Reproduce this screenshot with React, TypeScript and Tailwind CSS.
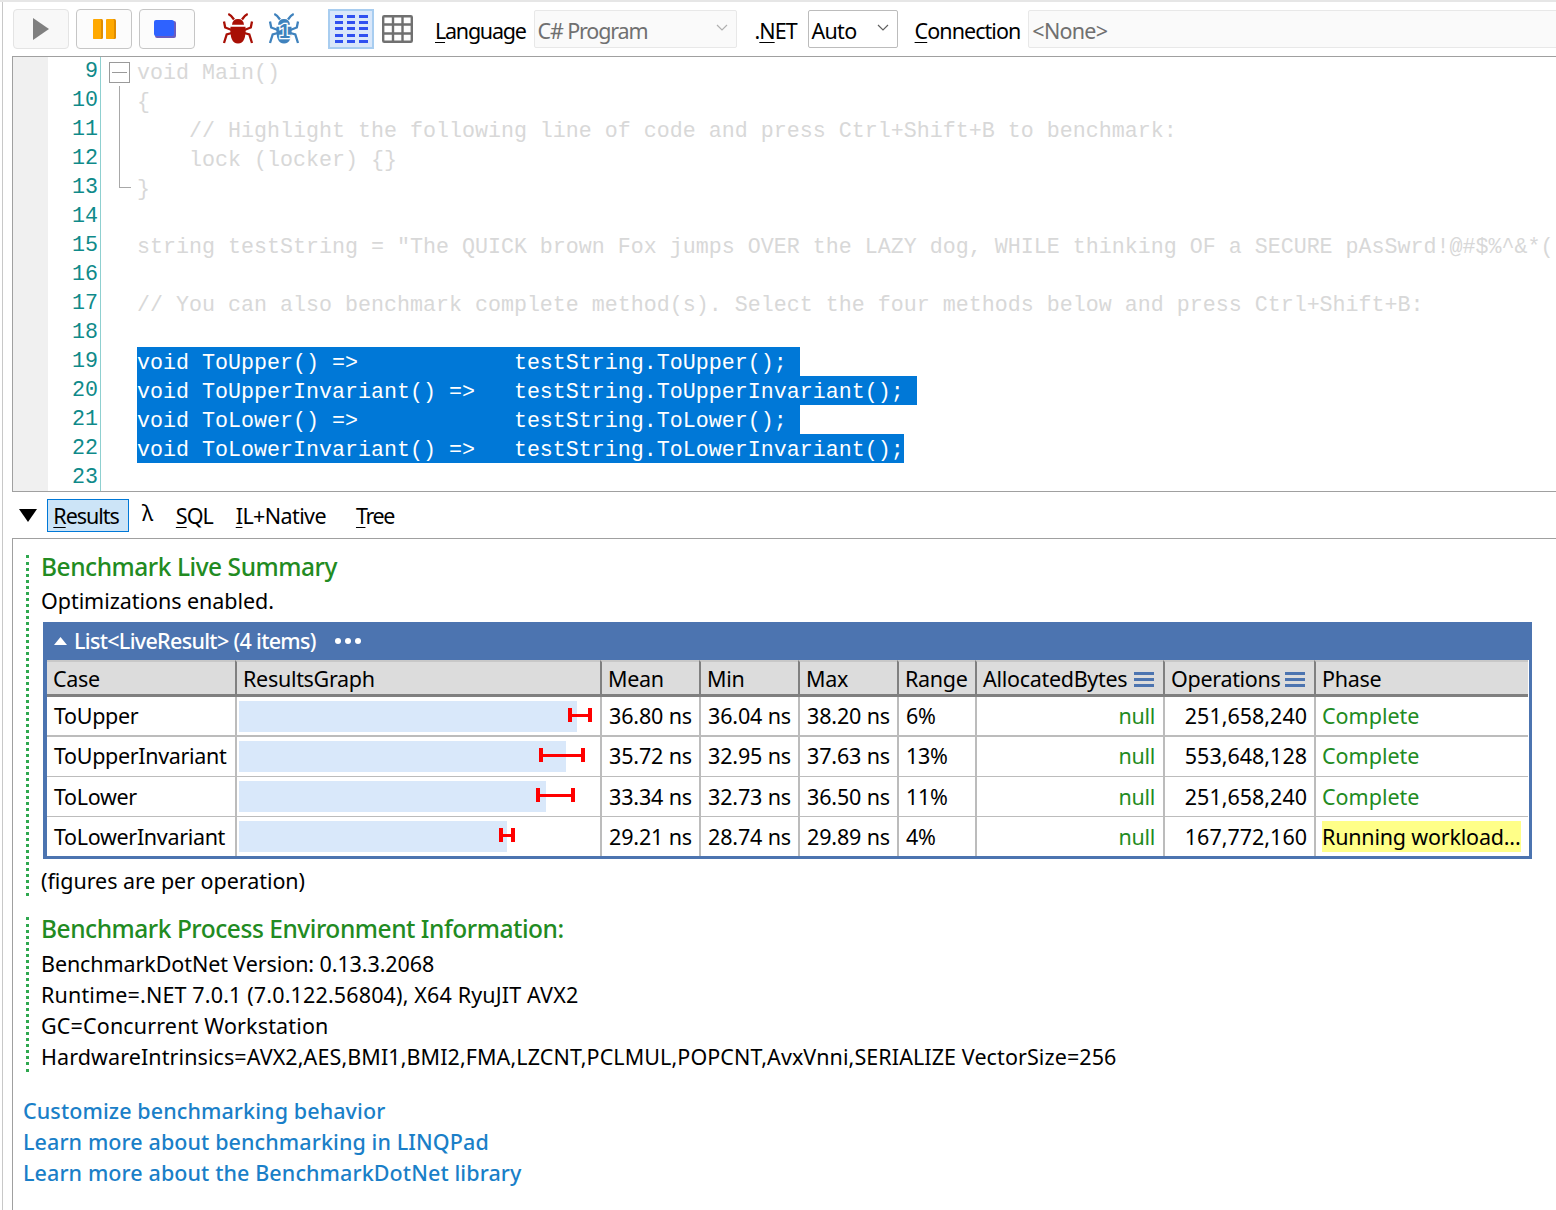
import React from "react";

const ui = "font-['Noto_Sans',sans-serif]";
const mono = "font-['Liberation_Mono',monospace]";

function Mn({ k, rest, pre = "" }: { k: string; rest: string; pre?: string }) {
  return (
    <span>
      {pre}
      <span className="underline underline-offset-[3px] decoration-1">{k}</span>
      {rest}
    </span>
  );
}

function Bug({ color, one }: { color: string; one?: boolean }) {
  return (
    <svg width="32" height="32" viewBox="0 0 32 32" fill="none">
      <g stroke={color} strokeWidth="2.3" fill="none">
        <path d="M6.3 1 Q9 2 12 6.5" />
        <path d="M25.7 1 Q23 2 20 6.5" />
        <path d="M2 8.5 L3.2 14.5 L9.7 17" />
        <path d="M30 8.5 L28.8 14.5 L22.3 17" />
        <path d="M2 30 L4.7 21.5 L9.7 20" />
        <path d="M30 30 L27.3 21.5 L22.3 20" />
      </g>
      <path d="M10 11.7 Q10.5 6 16 6 Q21.5 6 22 11.7 Z" fill={color} />
      <path d="M8.5 13.7 H23.5 Q24.5 30.5 16 30.5 Q7.5 30.5 8.5 13.7 Z" fill={color} />
      {one && (
        <text
          x="16"
          y="25"
          textAnchor="middle"
          fontFamily="Liberation Sans, sans-serif"
          fontWeight="700"
          fontSize="20"
          fill={color}
          stroke="#ffffff"
          strokeWidth="2.4"
          paintOrder="stroke"
        >
          1
        </text>
      )}
    </svg>
  );
}

function ToolButton({ children, faded }: { children: React.ReactNode; faded?: boolean }) {
  return (
    <div className={`w-[56px] h-[40px] shrink-0 rounded-[4px] border flex items-center justify-center ${faded ? "border-[#e4e4e4] bg-[#f8f8f8]" : "border-[#c6c6c6] bg-[#fcfcfc]"}`}>
      {children}
    </div>
  );
}

function Combo({ label, w, dark, track }: { label: string; w: string; dark?: boolean; track: string }) {
  return (
    <div className={`${w} h-[38px] shrink-0 rounded-[2px] border flex items-center justify-between pl-[3px] pr-[8px] ${dark ? "border-[#bcbcbc] text-black" : "border-[#e8e8e8] bg-[#fafafa] text-[#707070]"}`}>
      <span className={`pt-[4px] ${track}`}>{label}</span>
      <svg width="12" height="8" viewBox="0 0 12 8" className="mb-[3px]"><path d="M1 1 L6 6 L11 1" fill="none" stroke={dark ? "#606060" : "#b0b0b0"} strokeWidth="1.2" /></svg>
    </div>
  );
}

const codeRows: { n: number; text?: string; sel?: boolean; fold?: "box" | "line" | "end" }[] = [
  { n: 9, text: "void Main()", fold: "box" },
  { n: 10, text: "{", fold: "line" },
  { n: 11, text: "    // Highlight the following line of code and press Ctrl+Shift+B to benchmark:", fold: "line" },
  { n: 12, text: "    lock (locker) {}", fold: "line" },
  { n: 13, text: "}", fold: "end" },
  { n: 14 },
  { n: 15, text: 'string testString = "The QUICK brown Fox jumps OVER the LAZY dog, WHILE thinking OF a SECURE pAsSwrd!@#$%^&*(' },
  { n: 16 },
  { n: 17, text: "// You can also benchmark complete method(s). Select the four methods below and press Ctrl+Shift+B:" },
  { n: 18 },
  { n: 19, text: "void ToUpper() =>            testString.ToUpper(); ", sel: true },
  { n: 20, text: "void ToUpperInvariant() =>   testString.ToUpperInvariant(); ", sel: true },
  { n: 21, text: "void ToLower() =>            testString.ToLower(); ", sel: true },
  { n: 22, text: "void ToLowerInvariant() =>   testString.ToLowerInvariant();", sel: true },
  { n: 23 },
];

function Fold({ kind }: { kind?: "box" | "line" | "end" }) {
  if (kind === "box")
    return (
      <div className="w-[21px] h-[21px] ml-[8px] mt-[5px] border border-[#9a9a9a] flex items-center justify-center">
        <div className="w-[15px] h-px bg-[#9a9a9a]" />
      </div>
    );
  if (kind === "line") return <div className="ml-[18px] w-px h-full bg-[#a8a8a8]" />;
  if (kind === "end") return <div className="ml-[18px] w-[12px] h-[15px] border-l border-b border-[#a8a8a8]" />;
  return null;
}

const headers = ["Case", "ResultsGraph", "Mean", "Min", "Max", "Range", "AllocatedBytes", "Operations", "Phase"];

const rows = [
  { name: "ToUpper", bar: "w-[338px]", errL: "ml-[329px]", errW: "w-[24px]", mean: "36.80 ns", min: "36.04 ns", max: "38.20 ns", range: "6%", ops: "251,658,240", phase: "Complete", border: "border-b-2 h-[40px]", pad: "" },
  { name: "ToUpperInvariant", bar: "w-[327px]", errL: "ml-[300px]", errW: "w-[46px]", mean: "35.72 ns", min: "32.95 ns", max: "37.63 ns", range: "13%", ops: "553,648,128", phase: "Complete", border: "border-b h-[40px]", pad: "" },
  { name: "ToLower", bar: "w-[307px]", errL: "ml-[297px]", errW: "w-[39px]", mean: "33.34 ns", min: "32.73 ns", max: "36.50 ns", range: "11%", ops: "251,658,240", phase: "Complete", border: "border-b h-[40px]", pad: "pt-[2px]" },
  { name: "ToLowerInvariant", bar: "w-[268px]", errL: "ml-[260px]", errW: "w-[16px]", mean: "29.21 ns", min: "28.74 ns", max: "29.89 ns", range: "4%", ops: "167,772,160", phase: "Running", border: "h-[39px]", pad: "pt-[2px]" },
];

function Menu() {
  return (
    <span className="ml-auto mr-[3px] flex flex-col gap-[3px] w-[20px]">
      <span className="h-[3px] bg-[#4c74b0]" />
      <span className="h-[3px] bg-[#4c74b0]" />
      <span className="h-[3px] bg-[#4c74b0]" />
    </span>
  );
}

function DottedBlock({ children }: { children: React.ReactNode }) {
  return (
    <div className="ml-[13px] pl-[12px] border-l-[3px] border-dotted border-[#2fa84f]">{children}</div>
  );
}

const heading = "text-[#228b22] text-[24.5px] tracking-[-0.46px] font-medium leading-[23px]";

export default function App() {
  const cell = "flex items-center border-[#bcbcbc] px-[7px] overflow-hidden whitespace-nowrap";
  return (
    <div className={`${ui} w-[1556px] h-[1210px] overflow-hidden bg-white text-black text-[21.5px] tracking-[-0.3px] border-t-2 border-t-[#e6e6e6] pl-[2px]`}>
      <div className="border-l border-l-[#c8c8c8] h-full">
        {/* toolbar */}
        <div className="h-[54px] flex items-center pl-[10px] tracking-[-1px]">
          <div className="flex gap-[7px] shrink-0">
            <ToolButton faded>
              <svg width="18" height="24" viewBox="0 0 18 24"><path d="M1 1 L17 12 L1 23 Z" fill="#808080" /></svg>
            </ToolButton>
            <ToolButton>
              <svg width="24" height="22" viewBox="0 0 24 22">
                <rect x="1" y="1" width="10" height="20" rx="1.5" fill="#e08c00" />
                <rect x="1" y="1" width="8" height="20" rx="1.5" fill="#ffa900" />
                <rect x="14" y="1" width="10" height="20" rx="1.5" fill="#e08c00" />
                <rect x="14" y="1" width="8" height="20" rx="1.5" fill="#ffa900" />
              </svg>
            </ToolButton>
            <ToolButton>
              <svg width="22" height="18" viewBox="0 0 22 18" className="mr-[4px]">
                <rect x="1" y="1" width="21" height="17" rx="2" fill="#6a5cc0" />
                <rect x="0" y="0" width="20" height="16" rx="2" fill="#2e62ff" />
              </svg>
            </ToolButton>
          </div>
          <div className="ml-[27px] shrink-0"><Bug color="#a80f05" /></div>
          <div className="ml-[14px] shrink-0"><Bug color="#3f82bd" one /></div>
          <div className="ml-[28px] w-[46px] h-[40px] shrink-0 bg-[#d9e7fa] border-2 border-[#a8cdf0] flex items-center justify-center">
            <svg width="33" height="29" viewBox="0 0 33 29" fill="#2f50f0">
              {[0, 6, 12, 19, 25].map((y) => (
                <g key={y}>
                  <rect x="0" y={y} width="8" height="3" />
                  <rect x="12" y={y} width="8" height="3" />
                  <rect x="24" y={y} width="9" height="3" />
                </g>
              ))}
            </svg>
          </div>
          <div className="ml-[8px] shrink-0">
            <svg width="31" height="28" viewBox="0 0 31 28" fill="none" stroke="#707070" strokeWidth="2.4">
              <rect x="1.2" y="1.2" width="28.6" height="25.6" rx="1" />
              <path d="M11 1 V27 M20.5 1 V27 M1 9.5 H30 M1 18.5 H30" />
            </svg>
          </div>
          <div className="ml-[22px] shrink-0 pt-[4px] tracking-[-1.25px]"><Mn k="L" rest="anguage" /></div>
          <div className="ml-[8px] shrink-0"><Combo label="C# Program" w="w-[203px]" track="tracking-[-1.15px]" /></div>
          <div className="ml-[18px] shrink-0 pt-[4px]"><Mn pre="." k="N" rest="ET" /></div>
          <div className="ml-[11px] shrink-0"><Combo label="Auto" w="w-[90px]" dark track="tracking-[-0.75px]" /></div>
          <div className="ml-[17px] shrink-0 pt-[4px] tracking-[-0.95px]"><Mn k="C" rest="onnection" /></div>
          <div className="ml-[8px] shrink-0"><Combo label="<None>" w="w-[600px]" track="tracking-[-0.75px]" /></div>
        </div>

        {/* editor */}
        <div className={`${mono} ml-[9px] border border-[#a0a0a0] border-r-0 h-[436px] overflow-hidden text-[21.67px] tracking-[0px] leading-[29px]`}>
          {codeRows.map((r) => (
            <div key={r.n} className="flex h-[29px]">
              <div className="w-[35px] bg-[#f0f0f0] shrink-0" />
              <div className="w-[50px] text-right text-[#0f8a8a] shrink-0">{r.n}</div>
              <div className="w-px ml-[2px] bg-[#8fd0d0] shrink-0" />
              <div className="w-[36px] shrink-0"><Fold kind={r.fold} /></div>
              <pre className={`${mono} whitespace-pre leading-[33px] ${r.sel ? "" : "text-[#d8d8d8]"}`}>
                {r.text ? <span className={r.sel ? "block w-fit h-[29px] bg-[#0078d7] text-white" : ""}>{r.text}</span> : null}
              </pre>
            </div>
          ))}
        </div>

        {/* tabs */}
        <div className="h-[46px] flex items-center">
          <svg width="18" height="13" viewBox="0 0 18 13" className="ml-[16px] shrink-0"><path d="M0 0 H18 L9 13 Z" fill="#000" /></svg>
          <div className="ml-[10px] h-[33px] w-[82px] pt-[2px] pr-[4px] flex items-center justify-center bg-[#cce4f7] border border-[#0078d7] tracking-[-1.05px]"><Mn k="R" rest="esults" /></div>
          <div className="ml-[13px] mb-[3px]">λ</div>
          <div className="ml-[23px] pt-[2px] tracking-[-1px]"><Mn k="S" rest="QL" /></div>
          <div className="ml-[23px] pt-[2px] tracking-[-0.6px]"><Mn k="I" rest="L+Native" /></div>
          <div className="ml-[30px] pt-[2px] tracking-[-1.4px]"><Mn k="T" rest="ree" /></div>
        </div>

        {/* results panel */}
        <div className="ml-[9px] border-l border-t border-[#a0a0a0] h-[672px] pt-[16px]">
          <DottedBlock>
            <div className={heading}>Benchmark Live Summary</div>
            <div className="mt-[7px] leading-[31px] tracking-[-0.05px]">Optimizations enabled.</div>
            <div className="mt-[6px] w-[1489px] ml-[2px] bg-[#4c74b0] p-[3px] pt-0 -mr-[2px]">
              <div className="h-[38px] flex items-center text-white pl-[8px] font-medium tracking-[-0.68px]">
                <svg width="13" height="8" viewBox="0 0 13 8"><path d="M0 8 L6.5 0 L13 8 Z" fill="#fff" /></svg>
                <span className="ml-[7px]">{"List<LiveResult> (4 items)"}</span>
                <span className="ml-[19px] flex gap-[4px]">
                  <span className="w-[6px] h-[6px] rounded-full bg-white" />
                  <span className="w-[6px] h-[6px] rounded-full bg-white" />
                  <span className="w-[6px] h-[6px] rounded-full bg-white" />
                </span>
              </div>
              <div className="bg-white grid grid-cols-[188px_365px_99px_99px_99px_78px_188px_151px_214px] ml-[1px]">
                {headers.map((h, i) => (
                  <div key={h} className={`bg-[#dcdcdc] h-[37px] pt-[2px] border-b-[3px] border-t-2 border-b-[#808080] border-t-[#c8c8c8] px-[6px] flex items-center whitespace-nowrap ${i ? "border-l-2 border-l-[#808080]" : ""}`}>
                    <span>{h}</span>
                    {(h === "AllocatedBytes" || h === "Operations") && <Menu />}
                  </div>
                ))}
                {rows.map((r) => (
                  <React.Fragment key={r.name}>
                    <div className={`${cell} ${r.border} ${r.pad} tracking-[-0.33px]`}>{r.name}</div>
                    <div className={`${cell} ${r.border} border-l-2 !px-[2px] relative`}>
                      <div className={`${r.bar} h-[31px] bg-[#d9e8fa]`} />
                      <div className={`absolute left-[2px] top-[11px] ${r.errL} ${r.errW} h-[14px] border-x-4 border-[#ff0000] flex items-center`}>
                        <div className="w-full h-[3px] bg-[#ff0000]" />
                      </div>
                    </div>
                    <div className={`${cell} ${r.border} ${r.pad} border-l-2 justify-end tracking-[-0.15px]`}>{r.mean}</div>
                    <div className={`${cell} ${r.border} ${r.pad} border-l-2 justify-end tracking-[-0.15px]`}>{r.min}</div>
                    <div className={`${cell} ${r.border} ${r.pad} border-l-2 justify-end tracking-[-0.15px]`}>{r.max}</div>
                    <div className={`${cell} ${r.border} ${r.pad} border-l-2`}>{r.range}</div>
                    <div className={`${cell} ${r.border} ${r.pad} border-l-2 justify-end !pr-[8px] text-[#228b22]`}>null</div>
                    <div className={`${cell} ${r.border} ${r.pad} border-l-2 justify-end tracking-[0px]`}>{r.ops}</div>
                    <div className={`${cell} ${r.border} border-l-2 !px-[6px] ${r.phase === "Running" ? "" : r.pad}`}>
                      {r.phase === "Running" ? (
                        <span className="bg-[#ffff88] h-[31px] leading-[31px] w-[199px] block tracking-[-0.2px]">Running workload...</span>
                      ) : (
                        <span className="text-[#228b22] tracking-[0px]">{r.phase}</span>
                      )}
                    </div>
                  </React.Fragment>
                ))}
              </div>
            </div>
            <div className="mt-[6px] leading-[31px] tracking-[-0.05px]">(figures are per operation)</div>
          </DottedBlock>
          <div className="mt-[21px]">
            <DottedBlock>
              <div className={heading}>Benchmark Process Environment Information:</div>
              <div className="mt-[8px] leading-[31px] tracking-[-0.09px]">BenchmarkDotNet Version: 0.13.3.2068</div>
              <div className="leading-[31px] tracking-[0.15px]">{"Runtime=.NET 7.0.1 (7.0.122.56804), X64 RyuJIT AVX2"}</div>
              <div className="leading-[31px] tracking-[0.15px]">GC=Concurrent Workstation</div>
              <div className="leading-[31px] tracking-[0.09px]">HardwareIntrinsics=AVX2,AES,BMI1,BMI2,FMA,LZCNT,PCLMUL,POPCNT,AvxVnni,SERIALIZE VectorSize=256</div>
            </DottedBlock>
          </div>
          <div className="mt-[23px] ml-[10px] text-[#1a7fc8] font-medium leading-[31px] tracking-[0.1px]">
            <div>Customize benchmarking behavior</div>
            <div>Learn more about benchmarking in LINQPad</div>
            <div>Learn more about the BenchmarkDotNet library</div>
          </div>
        </div>
      </div>
    </div>
  );
}
